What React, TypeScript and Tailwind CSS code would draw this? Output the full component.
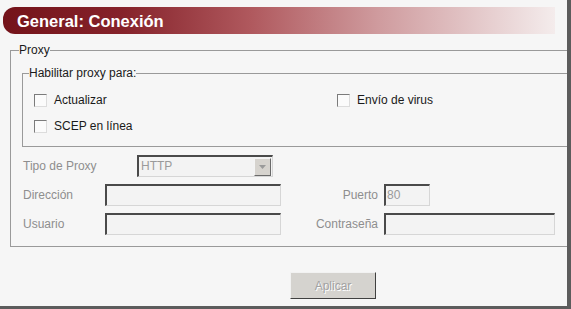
import React from "react"

function Check({ label }: { label: string }) {
    return (
        <label className="flex items-center h-[20px]">
            <span className="w-[13px] h-[13px] border border-t-[#7b7b7b] border-l-[#7b7b7b] border-r-[#dcdcdc] border-b-[#dcdcdc] bg-[#fbfbfb]" />
            <span className="ml-[7px] text-[12px] text-[#1a1a1a]">{label}</span>
        </label>
    )
}

function Field({ w, value }: { w: string; value?: string }) {
    return (
        <div className={`${w} h-[22px] border-t-2 border-l-2 border-t-[#4a4a4a] border-l-[#4a4a4a] border-r border-b border-r-[#d6d6d6] border-b-[#d6d6d6] bg-[#f3f3f3] pl-[1px] text-[12px] leading-[19px] text-[#9a9a9a]`}>
            {value}
        </div>
    )
}

function App() {
    return (
        <div className="w-[571px] h-[309px] bg-[#f6f6f6] border-r-[4px] border-b-[3px] border-[#5c5c5c] pt-[7px] pl-[3px] font-['Liberation_Sans',Arial,sans-serif] overflow-hidden">

            <div className="w-[552px] h-[27px] rounded-l-[12px] bg-[linear-gradient(90deg,#74131a_0%,#86232b_22%,#b0595e_45%,#cf9b9e_68%,#f4ecec_100%)] flex items-center pl-[14px]">
                <span className="text-white font-bold text-[16.5px] pt-[1px]">General: Conexión</span>
            </div>

            <fieldset className="mt-[9px] ml-[7px] w-[562px] border border-[#9a9a9a] pl-[8px] pb-[11px]">
                <legend className="text-[12px] leading-[14px] text-[#1a1a1a]">Proxy</legend>

                <fieldset className="mt-[9px] ml-[3px] border border-[#9a9a9a] pl-[6px] pt-[10px] pb-[10px]">
                    <legend className="text-[12px] leading-[14px] text-[#1a1a1a]">Habilitar proxy para:</legend>
                    <div className="flex pl-[5px]">
                        <div className="w-[303px] flex flex-col gap-[6px]">
                            <Check label="Actualizar" />
                            <Check label="SCEP en línea" />
                        </div>
                        <Check label="Envío de virus" />
                    </div>
                </fieldset>

                <div className="mt-[8px] ml-[4px] flex flex-col gap-[7px] text-[12px] text-[#8e8e8e]">
                    <div className="flex items-center h-[22px]">
                        <span className="w-[114px]">Tipo de Proxy</span>
                        <div className="w-[136px] h-[22px] flex border-t-2 border-l-2 border-t-[#4a4a4a] border-l-[#4a4a4a] border-r border-b border-r-[#d6d6d6] border-b-[#d6d6d6] bg-[#f3f3f3]">
                            <span className="flex-1 pl-[2px] leading-[19px] text-[#9a9a9a]">HTTP</span>
                            <span className="w-[17px] h-[18px] mt-[1px] mr-[1px] bg-[#d6d3ce] border border-t-[#f4f4f4] border-l-[#f4f4f4] border-r-[#6a6a6a] border-b-[#6a6a6a] flex items-center justify-center">
                                <svg width="7" height="4" viewBox="0 0 7 4"><path d="M0 0h7L3.5 4z" fill="#9a9a9a" /></svg>
                            </span>
                        </div>
                    </div>
                    <div className="flex items-center h-[22px]">
                        <span className="w-[82px]">Dirección</span>
                        <Field w="w-[176px]" />
                        <span className="w-[103px] text-right pr-[6px]">Puerto</span>
                        <Field w="w-[46px]" value="80" />
                    </div>
                    <div className="flex items-center h-[22px]">
                        <span className="w-[82px]">Usuario</span>
                        <Field w="w-[176px]" />
                        <span className="w-[103px] text-right pr-[6px]">Contraseña</span>
                        <Field w="w-[171px]" />
                    </div>
                </div>
            </fieldset>

            <button className="mt-[25px] ml-[287px] w-[86px] h-[27px] bg-[#d5d3cf] border border-t-[#f2f2f2] border-l-[#f2f2f2] border-r-[#404040] border-b-[#404040] text-[12px] text-[#a2a2a2] [text-shadow:1px_1px_0_#ffffff]">
                Aplicar
            </button>

        </div>
    )
}

export default App
